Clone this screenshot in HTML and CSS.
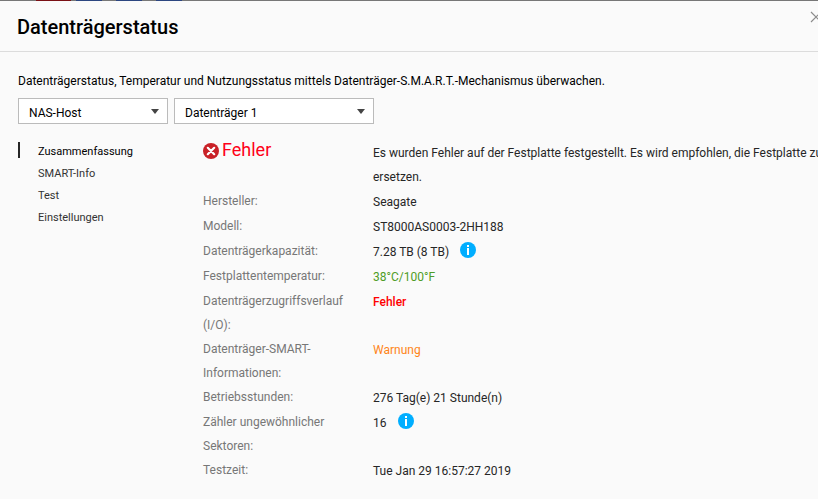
FILE: index.html
```html
<!DOCTYPE html>
<html lang="de">
<head>
    <meta charset="UTF-8">
    <meta name="viewport" content="width=device-width, initial-scale=1.0">
    <title>Datenträgerstatus</title>
    <link rel="stylesheet" href="styles.css">
</head>
<body>

<div class="desktop-strip"></div>

<div class="dialog">
    <header class="dialog-header">
        <h1>Datenträgerstatus</h1>
        <button class="close-btn" type="button" aria-label="Schließen">
            <svg width="12" height="12" viewBox="0 0 12 12"><path d="M1 1l10 10M11 1L1 11" stroke="#8c8c8c" stroke-width="1.2" fill="none"/></svg>
        </button>
    </header>

    <div class="dialog-body">
        <p class="intro">Datenträgerstatus, Temperatur und Nutzungsstatus mittels Datenträger-S.M.A.R.T.-Mechanismus überwachen.</p>

        <div class="selectors">
            <div class="select-box host">
                <select aria-label="Host">
                    <option>NAS-Host</option>
                </select>
            </div>
            <div class="select-box disk">
                <select aria-label="Datenträger">
                    <option>Datenträger 1</option>
                </select>
            </div>
        </div>

        <div class="columns">
            <nav class="side-nav">
                <a class="active" href="#summary">Zusammenfassung</a>
                <a href="#smart">SMART-Info</a>
                <a href="#test">Test</a>
                <a href="#settings">Einstellungen</a>
            </nav>

            <table class="summary" id="summary">
                <tr>
                    <th scope="row">
                        <span class="status">
                            <svg width="16" height="16" viewBox="0 0 16 16"><circle cx="8" cy="8" r="8" fill="#c92127"/><path d="M4.8 4.8l6.4 6.4M11.2 4.8l-6.4 6.4" stroke="#fff" stroke-width="2.2" stroke-linecap="round"/></svg>
                            <span>Fehler</span>
                        </span>
                    </th>
                    <td>Es wurden Fehler auf der Festplatte festgestellt. Es wird empfohlen, die Festplatte zu ersetzen.</td>
                </tr>
                <tr><th scope="row">Hersteller:</th><td>Seagate</td></tr>
                <tr><th scope="row">Modell:</th><td>ST8000AS0003-2HH188</td></tr>
                <tr>
                    <th scope="row">Datenträgerkapazität:</th>
                    <td>
                        <span class="with-info">7.28 TB (8 TB)
                            <button class="info-btn" type="button" aria-label="Info zur Kapazität">
                                <svg width="16" height="16" viewBox="0 0 16 16"><circle cx="8" cy="8" r="8" fill="#00aeff"/><path d="M7 3h2v2H7zM7 6h2v7H7z" fill="#fff"/></svg>
                            </button>
                        </span>
                    </td>
                </tr>
                <tr><th scope="row">Festplattentemperatur:</th><td class="good">38°C/100°F</td></tr>
                <tr><th scope="row">Datenträgerzugriffsverlauf (I/O):</th><td class="error">Fehler</td></tr>
                <tr><th scope="row">Datenträger-SMART-Informationen:</th><td class="warning">Warnung</td></tr>
                <tr><th scope="row">Betriebsstunden:</th><td>276 Tag(e) 21 Stunde(n)</td></tr>
                <tr>
                    <th scope="row">Zähler ungewöhnlicher Sektoren:</th>
                    <td>
                        <span class="with-info">16
                            <button class="info-btn" type="button" aria-label="Info zu Sektoren">
                                <svg width="16" height="16" viewBox="0 0 16 16"><circle cx="8" cy="8" r="8" fill="#00aeff"/><path d="M7 3h2v2H7zM7 6h2v7H7z" fill="#fff"/></svg>
                            </button>
                        </span>
                    </td>
                </tr>
                <tr><th scope="row">Testzeit:</th><td>Tue Jan 29 16:57:27 2019</td></tr>
            </table>
        </div>
    </div>
</div>

</body>
</html>
```
FILE: styles.css
```css
* {
    box-sizing: border-box;
}

body {
    margin: 0;
    min-height: 100vh;
    overflow: hidden;
    background-color: #fafafa;
    font-family: Roboto, "Liberation Sans", sans-serif;
    font-size: 12px;
    line-height: 24px;
    color: #262626;
}

/* Desktop icons showing above the dialog */
.desktop-strip {
    height: 1px;
    background: linear-gradient(to right,
        #777 36px, #7a1015 36px, #7a1015 71px,
        #777 71px, #777 76px, #2c4680 76px, #2c4680 102px,
        #777 102px, #777 116px, #2c4680 116px, #2c4680 142px,
        #777 142px, #777 156px, #2c4680 156px, #2c4680 182px,
        #777 182px);
}

/* Dialog is a little wider than the window */
.dialog {
    width: calc(100% + 24px);
}

.dialog-header {
    display: flex;
    justify-content: space-between;
    align-items: flex-start;
    height: 51px;
    padding: 10px 20px 0 17px;
    border-bottom: 1px solid #dcdcdc;
}

.dialog-header h1 {
    margin: 0;
    font-size: 20px;
    line-height: 32px;
    font-weight: 500;
    color: #000;
}

.close-btn,
.info-btn {
    display: flex;
    padding: 0;
    border: none;
    background: none;
    cursor: pointer;
}

.dialog-body {
    padding: 17px 8px 0 18px;
}

.intro {
    margin: 0 0 5px;
    color: #000;
}

/* Drop-downs */
.selectors {
    display: flex;
    gap: 6px;
}

.select-box {
    display: flex;
    align-items: center;
    height: 26px;
    background-color: #fff;
    border: 1px solid #bbb;
}

.select-box::after {
    content: "";
    width: 0;
    margin-right: 8px;
    margin-left: -16px;
    border: 4px solid transparent;
    border-top: 5px solid #444;
    border-bottom: none;
    pointer-events: none;
}

.select-box select {
    flex: 1;
    height: 24px;
    padding: 2px 20px 0 10px;
    border: none;
    background: none;
    appearance: none;
    font: inherit;
    color: #000;
}

.host {
    width: 150px;
}

.disk {
    width: 200px;
}

.columns {
    display: flex;
    align-items: flex-start;
    padding-top: 16px;
}

/* Side navigation */
.side-nav {
    flex: 0 0 185px;
    display: flex;
    flex-direction: column;
    padding-top: 2px;
}

.side-nav a {
    height: 16px;
    margin-bottom: 6px;
    padding-left: 18px;
    border-left: 2px solid transparent;
    font-size: 11px;
    line-height: 20px;
    color: #333;
    text-decoration: none;
}

.side-nav .active {
    border-left-color: #262626;
    color: #000;
}

/* Summary */
.summary {
    flex: 1;
    border-collapse: collapse;
    table-layout: fixed;
}

.summary th,
.summary td {
    padding: 0;
    vertical-align: top;
    text-align: left;
}

.summary th {
    width: 170px;
    padding-right: 20px;
    font-weight: 400;
    color: #777;
}

.summary td {
    padding-top: 1px;
}

.status {
    display: flex;
    gap: 3px;
    font-size: 18px;
    line-height: 20px;
    color: #ff0018;
}

.status svg {
    margin-top: 3px;
}

.with-info {
    display: flex;
    align-items: flex-start;
    gap: 11px;
}

.info-btn {
    margin-top: 2px;
}

.summary .good {
    color: #4f9d26;
}

.summary .error {
    font-weight: 500;
    color: #ff0000;
}

.summary .warning {
    color: #ff8519;
}
```
